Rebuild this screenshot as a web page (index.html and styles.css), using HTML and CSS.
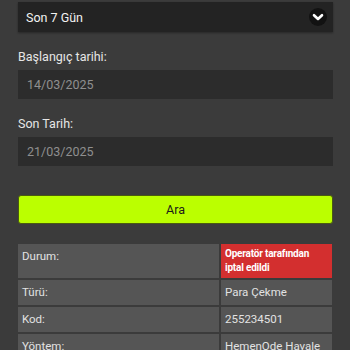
FILE: index.html
```html
<!DOCTYPE html>
<html lang="tr">
<head>
<meta charset="utf-8">
<link rel="stylesheet" href="styles.css">
</head>
<body>
<div class="page">
  <div class="select">
    <span>Son 7 Gün</span>
    <span class="chev"><svg width="18" height="18" viewBox="0 0 18 18"><circle cx="9" cy="9" r="9" fill="#121212"/><path d="M5 7.2 L9 11 L13 7.2" fill="none" stroke="#fff" stroke-width="2.6" stroke-linecap="round" stroke-linejoin="round"/></svg></span>
  </div>
  <div class="label">Başlangıç tarihi:</div>
  <div class="input">14/03/2025</div>
  <div class="label">Son Tarih:</div>
  <div class="input">21/03/2025</div>
  <button class="btn">Ara</button>
  <div class="table">
    <div class="cell">Durum:</div>
    <div class="cell status">Operatör tarafından iptal edildi</div>
    <div class="cell">Türü:</div>
    <div class="cell">Para Çekme</div>
    <div class="cell">Kod:</div>
    <div class="cell">255234501</div>
    <div class="cell">Yöntem:</div>
    <div class="cell">HemenOde Havale</div>
  </div>
</div>
</body>
</html>
```

FILE: styles.css
```css
html, body {
  margin: 0;
  padding: 0;
  background: #3b3b3b;
  font-family: Roboto, "Liberation Sans", sans-serif;
  overflow: hidden;
}
.page {
  padding: 2px 17px 0 18px;
  display: flex;
  flex-direction: column;
}
.select {
  height: 30px;
  background: #232323;
  box-shadow: 0 1px 2px rgba(0,0,0,0.35);
  display: flex;
  align-items: center;
  justify-content: space-between;
  padding: 0 6px 0 8px;
  color: #f2f2f2;
  font-size: 12.5px;
}
.chev {
  display: flex;
}
.label {
  margin-top: 17px;
  margin-bottom: 5px;
  height: 16px;
  line-height: 16px;
  color: #e6e6e6;
  font-size: 12.5px;
}
.input {
  height: 29px;
  line-height: 29px;
  background: #2c2c2c;
  color: #8f8f8f;
  font-size: 12.5px;
  padding-left: 9px;
}
.btn {
  margin-top: 29px;
  height: 29px;
  background: #bbff00;
  border: 1px solid #4a5a10;
  border-radius: 3px;
  font-family: Roboto, "Liberation Sans", sans-serif;
  font-size: 12.5px;
  color: #1b1b1b;
  padding: 0;
}
.table {
  margin-top: 20px;
  display: grid;
  grid-template-columns: 201px 1fr;
  gap: 2px;
  margin-right: 1px;
}
.cell {
  background: #555555;
  color: #e2e2e2;
  font-size: 11.5px;
  line-height: 17px;
  padding: 4px 4px;
}
.status {
  background: #d32f2f;
  color: #ffffff;
  font-weight: bold;
  font-size: 10px;
  letter-spacing: -0.2px;
  line-height: 14px;
  padding: 3px 12px 3px 4px;
}
```
